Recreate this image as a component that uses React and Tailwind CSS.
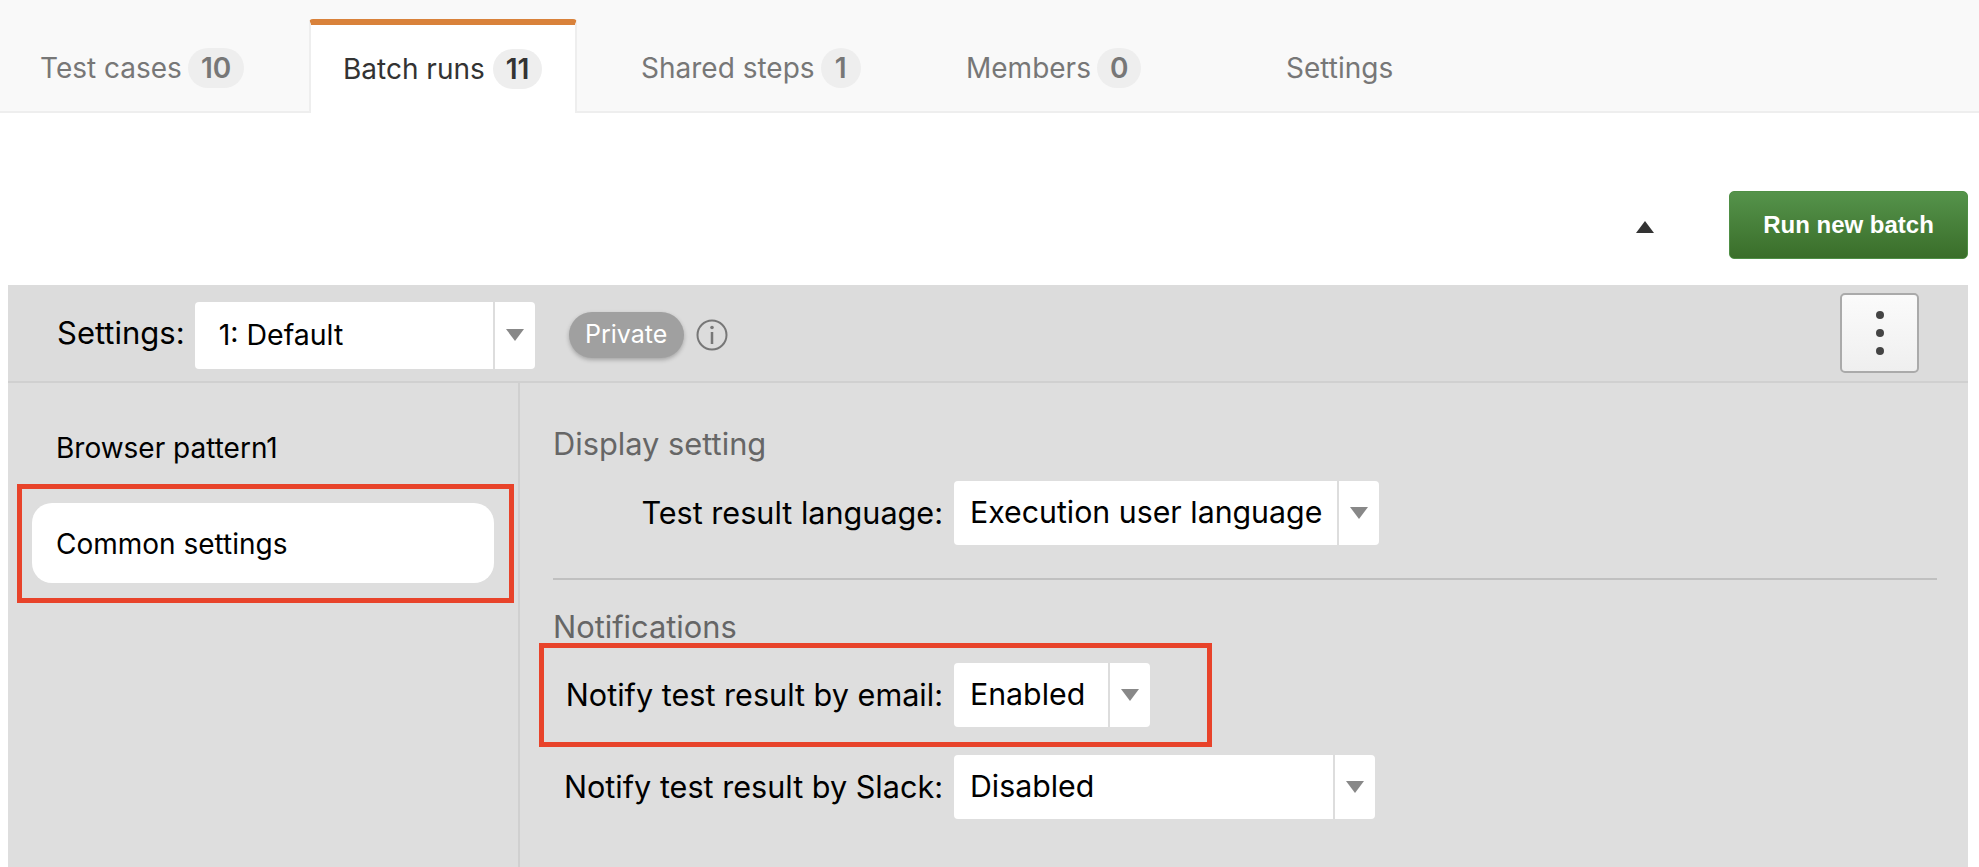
import React from 'react';

const tabs = [
  { label: 'Test cases', count: 10, cls: 'w-[309px] pl-[40px]' },
  { label: 'Batch runs', count: 11, active: true, cls: 'w-[268px] pl-[32px]' },
  { label: 'Shared steps', count: 1, cls: 'w-[388px] pl-[64px]' },
  { label: 'Members', count: 0, cls: 'w-[320px] pl-[1px]' },
  { label: 'Settings', cls: 'w-[300px] pl-[1px]' },
];

function Tab({ label, count, active, cls }) {
  return (
    <div
      className={
        active
          ? `${cls} relative z-10 -mb-[2px] flex h-[94px] items-center gap-[8px] rounded-t-[4px] border-x-2 border-[#eeeeee] bg-white text-[#333333] border-t-[6px] border-t-[#d9823b]`
          : `${cls} flex h-[92px] items-center gap-[6px] pt-[6px] text-[#777777]`
      }
    >
      <span>{label}</span>
      {count !== undefined && (
        <span className="flex h-[40px] min-w-[40px] items-center justify-center rounded-full bg-[#eeeeee] px-[13px] font-semibold">
          {count}
        </span>
      )}
    </div>
  );
}

function Select({ value, width, tall }) {
  return (
    <div className={tall ? 'flex h-[67px] rounded-[4px] bg-white text-[28.5px] text-black' : 'flex h-[64px] rounded-[4px] bg-white text-[30.3px] text-black'} style={{ width }}>
      <div className={tall ? 'flex flex-1 items-center border-r-2 border-[#dddddd] pl-[24px]' : 'flex flex-1 items-center border-r-2 border-[#dddddd] pl-[16px]'}>{value}</div>
      <div className="flex w-[40px] items-center justify-center">
        <svg width="20" height="12" viewBox="0 0 20 12">
          <path d="M1 0h18l-9 12z" fill="#888888" />
        </svg>
      </div>
    </div>
  );
}

function Row({ label, children, marked }) {
  return (
    <div className="relative flex items-center">
      <div className="w-[401px] whitespace-nowrap pr-[11px] text-right text-[30.6px] text-black">{label}</div>
      {children}
      {marked && (
        <div className="absolute left-[-14px] top-[-20px] h-[104px] w-[673px] border-[5px] border-[#e8432a]" />
      )}
    </div>
  );
}

export default function App() {
  return (
    <div className="h-[867px] w-[1979px] overflow-hidden bg-white font-['Inter',sans-serif] text-[28px]">
      {/* tabs */}
      <div className="flex h-[113px] items-end border-b-2 border-[#eeeeee] bg-[#f9f9f9]">
        {tabs.map((t) => (
          <Tab key={t.label} {...t} />
        ))}
      </div>

      {/* toolbar */}
      <div className="flex h-[172px] items-start justify-end pr-[11px] pt-[78px]">
        <svg className="mr-[75px] mt-[30px]" width="18" height="12" viewBox="0 0 18 12">
          <path d="M9 0l9 12H0z" fill="#333333" />
        </svg>
        <button className="h-[68px] w-[239px] rounded-[5px] border border-[#4f8f45] bg-gradient-to-b from-[#55934b] to-[#3a6e2a] font-['Liberation_Sans',sans-serif] text-[24px] font-bold text-white">
          Run new batch
        </button>
      </div>

      {/* settings panel */}
      <div className="ml-[8px] mr-[11px] h-[582px] bg-[#dedede]">
        <div className="flex h-[98px] items-center border-b-2 border-[#d0d0d0] bg-[#dcdcdc] pl-[49px] pr-[49px]">
          <span className="mr-[10px] text-[31px] text-black">Settings:</span>
          <div className="mr-[34px] mt-[4px]">
            <Select value="1: Default" width={340} tall />
          </div>
          <span className="mt-[4px] flex h-[46px] w-[115px] items-center justify-center rounded-full bg-[#a0a0a0] text-[25px] text-white shadow-[0_2px_4px_rgba(0,0,0,0.25)]">
            Private
          </span>
          <svg className="ml-[12px] mt-[4px]" width="32" height="32" viewBox="0 0 32 32" fill="none" stroke="#777777" strokeWidth="2">
            <circle cx="16" cy="16" r="14.5" />
            <path d="M16 13v12" strokeWidth="2.5" />
            <circle cx="16" cy="8.5" r="1.8" fill="#777777" stroke="none" />
          </svg>
          <button className="ml-auto flex h-[80px] w-[79px] flex-col items-center justify-center gap-[10px] rounded-[5px] border-2 border-[#aaaaaa] bg-gradient-to-b from-[#fbfbfb] to-[#efefef]">
            <span className="h-[8px] w-[8px] rounded-full bg-[#444444]" />
            <span className="h-[8px] w-[8px] rounded-full bg-[#444444]" />
            <span className="h-[8px] w-[8px] rounded-full bg-[#444444]" />
          </button>
        </div>

        <div className="flex h-[484px]">
          {/* sidebar */}
          <div className="w-[512px] border-r-2 border-[#d0d0d0] pl-[9px] pr-[4px] pt-[41px] text-black">
            <div className="flex h-[48px] items-center pl-[39px]">Browser pattern1</div>
            <div className="mt-[12px] h-[119px] border-[5px] border-[#e8432a] pl-[10px] pr-[15px] pt-[14px]">
              <div className="flex h-[80px] items-center rounded-[20px] bg-white pl-[24px] pt-[2px]">Common settings</div>
            </div>
          </div>

          {/* form */}
          <div className="flex-1 pl-[33px] pr-[31px] pt-[41px] text-[30.8px]">
            <h3 className="h-[40px] leading-[40px] text-[#666666]">Display setting</h3>
            <div className="mt-[17px]">
              <Row label="Test result language:">
                <Select value="Execution user language" width={425} />
              </Row>
            </div>
            <div className="mt-[33px] border-t-2 border-[#c0c0c0]" />
            <h3 className="mt-[27px] h-[40px] leading-[40px] text-[#666666]">Notifications</h3>
            <div className="mt-[16px]">
              <Row label="Notify test result by email:" marked>
                <Select value="Enabled" width={196} />
              </Row>
            </div>
            <div className="mt-[28px]">
              <Row label="Notify test result by Slack:">
                <Select value="Disabled" width={421} />
              </Row>
            </div>
          </div>
        </div>
      </div>
    </div>
  );
}
